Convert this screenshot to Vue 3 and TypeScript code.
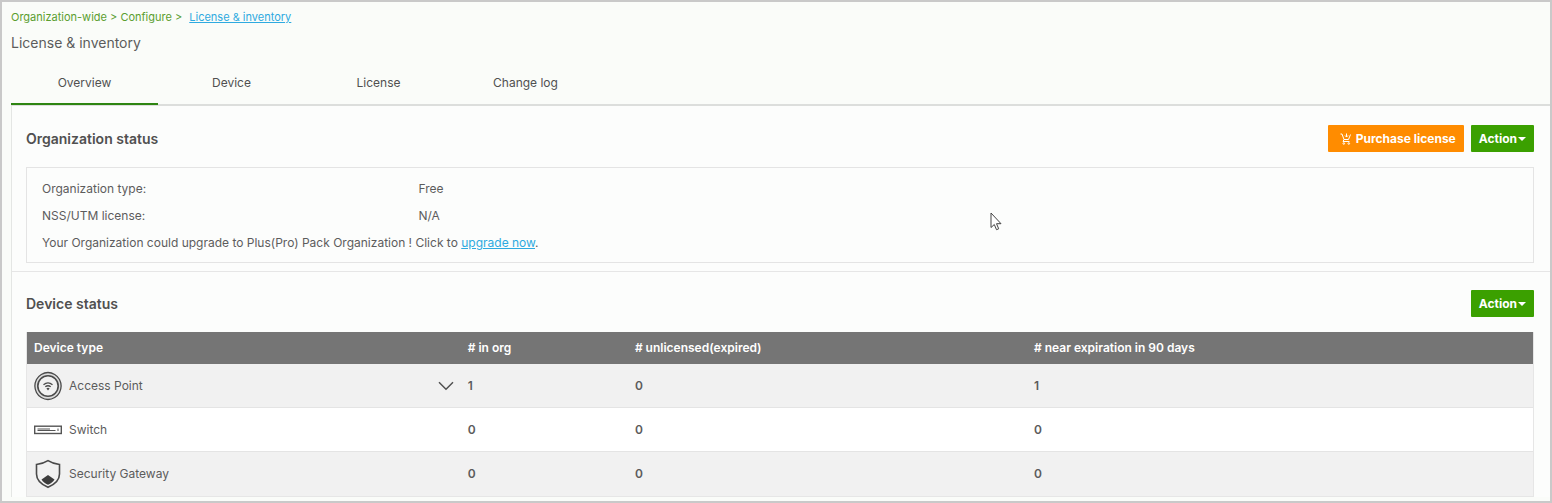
<script setup lang="ts">
import { ref } from 'vue'

type DeviceKind = 'ap' | 'switch' | 'gateway'

interface DeviceRow {
  kind: DeviceKind
  name: string
  inOrg: number
  unlicensed: number
  nearExpiration: number
  expandable: boolean
}

const tabs = ['Overview', 'Device', 'License', 'Change log']
const activeTab = ref('Overview')

const facts = [
  { label: 'Organization type:', value: 'Free' },
  { label: 'NSS/UTM license:', value: 'N/A' },
]

const rows: DeviceRow[] = [
  { kind: 'ap', name: 'Access Point', inOrg: 1, unlicensed: 0, nearExpiration: 1, expandable: true },
  { kind: 'switch', name: 'Switch', inOrg: 0, unlicensed: 0, nearExpiration: 0, expandable: false },
  { kind: 'gateway', name: 'Security Gateway', inOrg: 0, unlicensed: 0, nearExpiration: 0, expandable: false },
]
</script>

<template>
  <div class="page">
    <nav class="crumbs" aria-label="Breadcrumb">
      <span>Organization-wide &gt; Configure &gt;</span>
      <a href="#">License &amp; inventory</a>
    </nav>
    <h1>License &amp; inventory</h1>

    <div class="tabs" role="tablist">
      <button
        v-for="tab in tabs"
        :key="tab"
        type="button"
        role="tab"
        class="tab"
        :class="{ active: tab === activeTab }"
        :aria-selected="tab === activeTab"
        @click="activeTab = tab"
      >{{ tab }}</button>
    </div>

    <main class="panel">
      <section class="section">
        <header class="head">
          <h2>Organization status</h2>
          <button type="button" class="btn purchase">
            <svg width="12" height="12" viewBox="0 0 12 12" fill="none" stroke="currentColor" aria-hidden="true">
              <path d="M0.5 1H2L4 6.5H8.500L10.500 1.5M4 6.500L3 8.500H9.500M6.500 0.500V4M5 2.500L6.500 4L8 2.500" />
              <circle cx="3.800" cy="10.500" r="0.800" />
              <circle cx="8.800" cy="10.500" r="0.800" />
            </svg>
            Purchase license
          </button>
          <button type="button" class="btn action">Action<span class="caret"></span></button>
        </header>
        <div class="box">
          <dl>
            <div v-for="fact in facts" :key="fact.label" class="fact">
              <dt>{{ fact.label }}</dt>
              <dd>{{ fact.value }}</dd>
            </div>
          </dl>
          <p>Your Organization could upgrade to Plus(Pro) Pack Organization ! Click to <a href="#">upgrade now</a>.</p>
        </div>
      </section>

      <section class="section">
        <header class="head">
          <h2>Device status</h2>
          <button type="button" class="btn action">Action<span class="caret"></span></button>
        </header>
        <table>
          <thead>
            <tr>
              <th scope="col" class="c-type">Device type</th>
              <th scope="col" class="c-org"># in org</th>
              <th scope="col" class="c-unl"># unlicensed(expired)</th>
              <th scope="col"># near expiration in 90 days</th>
            </tr>
          </thead>
          <tbody>
            <tr v-for="row in rows" :key="row.kind">
              <td>
                <div class="device">
                  <svg v-if="row.kind === 'ap'" width="28" height="30" viewBox="0 0 28 30" fill="none" stroke="#4a4a4a" aria-hidden="true">
                    <path d="M14 1.500C18.500 1.500 23.500 4.500 25.500 8.500C27.500 12.500 27.500 17.500 25.500 21.500C23.500 25.500 18.500 28.500 14 28.500C9.500 28.500 4.500 25.500 2.500 21.500C0.500 17.500 0.500 12.500 2.500 8.500C4.500 4.500 9.500 1.500 14 1.500Z" fill="#dcdcdc" stroke-width="1.300" />
                    <circle cx="14" cy="15" r="10.200" fill="#f1f1f1" stroke-width="1.600" />
                    <path d="M9.500 13.700Q14 10 18.500 13.700M11.300 15.800Q14 13.600 16.700 15.800" stroke-width="1.400" />
                    <path d="M12.400 17.400Q14 16.200 15.600 17.400L14 19.400Z" fill="#4a4a4a" stroke="none" />
                  </svg>
                  <svg v-else-if="row.kind === 'switch'" width="28" height="30" viewBox="0 0 28 30" fill="none" stroke="#555" aria-hidden="true">
                    <rect x="0.700" y="11.200" width="26.600" height="7.300" stroke-width="1.400" />
                    <path d="M3.500 14H16M3.500 15.500H21.500M24 13.500V16" />
                  </svg>
                  <svg v-else width="28" height="30" viewBox="0 0 28 30" fill="none" stroke="#4a4a4a" aria-hidden="true">
                    <path d="M14 1.700C17.500 4 21.500 5 25.500 5.500V15C25.500 21.500 20.500 25.500 14 28.300C7.500 25.500 2.500 21.500 2.500 15V5.500C6.500 5 10.500 4 14 1.700Z" stroke-width="1.600" />
                    <path d="M14 16L20.500 20.500C19 23 17 24.300 14 25.700C11 24.300 9 23 7.500 20.500Z" fill="#3c3c3c" stroke="none" />
                  </svg>
                  <span>{{ row.name }}</span>
                  <button v-if="row.expandable" type="button" class="expand" aria-label="Show Access Point details">
                    <svg width="16" height="10" viewBox="0 0 16 10" fill="none" stroke="#505050" stroke-width="1.500" aria-hidden="true">
                      <path d="M1 1.200L8 8.200L15 1.200" />
                    </svg>
                  </button>
                </div>
              </td>
              <td class="num">{{ row.inOrg }}</td>
              <td class="num">{{ row.unlicensed }}</td>
              <td class="num">{{ row.nearExpiration }}</td>
            </tr>
          </tbody>
        </table>
      </section>
    </main>

    <svg class="pointer" width="12" height="19" viewBox="0 0 12 19" aria-hidden="true">
      <path d="M1 1V15.500L4.300 12.500L6.500 17.700L8.700 16.800L6.500 11.700H11Z" fill="#fff" stroke="#444" />
    </svg>
  </div>
</template>

<style>
body {
  margin: 0;
}
</style>

<style scoped>
.page {
  position: relative;
  box-sizing: border-box;
  min-height: 100vh;
  padding: 5px 0 4px 9px;
  border: 2px solid #c9c9c9;
  background: #fafcf9;
  color: #5c5c5c;
  font: 12px/20px Inter, "Liberation Sans", sans-serif;
}

button {
  margin: 0;
  border: 0;
  font: inherit;
  cursor: pointer;
}

a {
  color: #2eaae0;
  text-decoration: underline;
}

.crumbs {
  display: flex;
  gap: 7px;
  color: #5a9e2f;
  font-size: 11px;
}

h1 {
  margin: 3px 0 0;
  font-size: 14px;
  font-weight: 400;
  line-height: 26px;
}

.tabs {
  display: flex;
  margin-top: 6px;
  border-bottom: 2px solid #dcdedc;
}

.tab {
  width: 147px;
  height: 43px;
  margin-bottom: -1px;
  padding: 0;
  border-bottom: 2px solid transparent;
  background: none;
  color: #505050;
}

.tab.active {
  border-bottom-color: #2e8512;
}

.panel {
  border-left: 1px solid #e4e6e4;
  background: #fcfdfc;
}

.section {
  padding: 19px 16px 8px 14px;
}

.section + .section {
  padding-top: 18px;
  padding-bottom: 0;
  border-top: 1px solid #e6e6e6;
}

.head {
  display: flex;
  align-items: center;
  gap: 7px;
  margin-bottom: 15px;
}

h2 {
  flex: 1;
  margin: 0;
  color: #505050;
  font-size: 14px;
  font-weight: 600;
}

.btn {
  display: flex;
  align-items: center;
  height: 27px;
  padding: 0 8px;
  border-radius: 1px;
  color: #fff;
  font-weight: 700;
}

.purchase {
  gap: 4px;
  padding-left: 12px;
  background: #ff8c00;
}

.action {
  gap: 1px;
  background: #3ba000;
}

.caret {
  border: 4px solid transparent;
  border-top-color: #fff;
  border-bottom: 0;
}

.box {
  box-sizing: border-box;
  padding: 7px 15px 6px;
  border: 1px solid #e4e4e4;
  line-height: 27px;
}

dl,
dd,
p {
  margin: 0;
}

.fact {
  display: grid;
  grid-template-columns: 1fr 3fr;
  gap: 10px;
}

table {
  width: 100%;
  border: 1px solid #e6e6e6;
  border-top: 0;
  border-spacing: 0;
  table-layout: fixed;
}

th,
td {
  box-sizing: border-box;
  padding: 0 7px;
  text-align: left;
}

th {
  height: 32px;
  background: #757575;
  color: #fff;
  font-weight: 600;
}

.c-type {
  width: 28.8%;
}

.c-org {
  width: 11.1%;
}

.c-unl {
  width: 26.5%;
}

td {
  height: 44px;
  border-bottom: 1px solid #e4e4e4;
  background: #fff;
}

tr:nth-child(odd) td {
  background: #f1f1f1;
}

tr:last-child td {
  border-bottom: 0;
}

.num {
  font-weight: 600;
}

.device {
  display: flex;
  align-items: center;
  gap: 7px;
}

.device svg {
  display: block;
}

.expand {
  margin-left: auto;
  padding: 0;
  background: none;
}

.pointer {
  position: absolute;
  top: 210px;
  left: 988px;
}
</style>
